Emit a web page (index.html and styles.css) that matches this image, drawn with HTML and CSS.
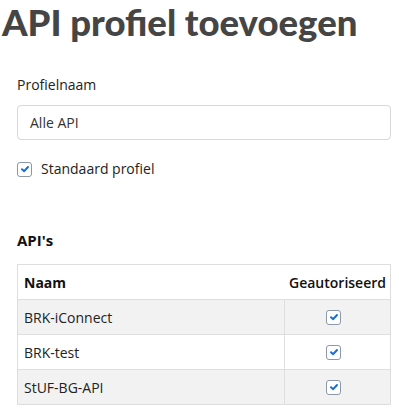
FILE: index.html
```html
<!DOCTYPE html>
<html lang="nl">
<head>
<meta charset="utf-8">
<title>API profiel toevoegen</title>
<link rel="stylesheet" href="styles.css">
</head>
<body>
<h1 class="title">API profiel toevoegen</h1>
<form class="form">
  <label class="field-label" for="naam">Profielnaam</label>
  <div class="input">Alle API</div>
  <div class="check-row">
    <span class="check"><svg viewBox="0 0 10 10" width="10" height="10"><path d="M2 5.2 L4.2 7.2 L8 3" fill="none" stroke="#1a6fd1" stroke-width="2" stroke-linecap="round" stroke-linejoin="round"/></svg></span>
    <span class="check-label">Standaard profiel</span>
  </div>
  <h2 class="section">API's</h2>
  <table class="table">
    <thead>
      <tr><th class="col-name">Naam</th><th class="col-auth">Geautoriseerd</th></tr>
    </thead>
    <tbody>
      <tr class="odd"><td>BRK-iConnect</td><td class="cell-check"><span class="check"><svg viewBox="0 0 10 10" width="10" height="10"><path d="M2 5.2 L4.2 7.2 L8 3" fill="none" stroke="#1a6fd1" stroke-width="2" stroke-linecap="round" stroke-linejoin="round"/></svg></span></td></tr>
      <tr><td>BRK-test</td><td class="cell-check"><span class="check"><svg viewBox="0 0 10 10" width="10" height="10"><path d="M2 5.2 L4.2 7.2 L8 3" fill="none" stroke="#1a6fd1" stroke-width="2" stroke-linecap="round" stroke-linejoin="round"/></svg></span></td></tr>
      <tr class="odd"><td>StUF-BG-API</td><td class="cell-check"><span class="check"><svg viewBox="0 0 10 10" width="10" height="10"><path d="M2 5.2 L4.2 7.2 L8 3" fill="none" stroke="#1a6fd1" stroke-width="2" stroke-linecap="round" stroke-linejoin="round"/></svg></span></td></tr>
    </tbody>
  </table>
</form>
</body>
</html>
```
FILE: styles.css
```css
html, body {
  margin: 0;
  padding: 0;
  background: #fff;
}
body {
  font-family: "Open Sans", "Noto Sans", sans-serif;
  font-size: 14px;
  color: #222;
}
.title {
  margin: 0;
  padding: 0 0 0 2px;
  font-family: "Lato", sans-serif;
  font-weight: 900;
  font-size: 36.5px;
  line-height: 44px;
  color: #454545;
}
.form {
  display: flex;
  flex-direction: column;
  padding: 31px 8px 0 17px;
}
.field-label {
  line-height: 20px;
  color: #222;
}
.input {
  margin-top: 10px;
  height: 35px;
  box-sizing: border-box;
  border: 1px solid #d4d7dc;
  border-radius: 4px;
  padding: 0 12px;
  display: flex;
  align-items: center;
  color: #333;
}
.check-row {
  margin-top: 19px;
  display: flex;
  align-items: center;
  gap: 9px;
  line-height: 20px;
}
.check {
  box-sizing: border-box;
  width: 15px;
  height: 15px;
  border: 1px solid #8c98aa;
  border-radius: 3px;
  display: inline-flex;
  align-items: center;
  justify-content: center;
  background: #fff;
  vertical-align: middle;
}
.section {
  margin: 51px 0 0;
  font-size: 15px;
  font-weight: 700;
  line-height: 20px;
  color: #111;
}
.table {
  margin-top: 14px;
  border-collapse: collapse;
  width: 100%;
}
.table th, .table td {
  box-sizing: border-box;
  border: 1px solid #dedede;
  padding: 0 6px;
  height: 35px;
  text-align: left;
}
.table th {
  font-weight: 700;
  color: #111;
}
.table thead th.col-name { border-right: none; }
.table thead th.col-auth {
  border-left: none;
  width: 106px;
  padding: 0 4px 0 4px;
  font-weight: 600;
  text-align: right;
}
.table tr.odd td { background: #f2f2f2; }
.table td.cell-check {
  text-align: center;
  padding: 0 14px 0 6px;
  line-height: 0;
}
```
